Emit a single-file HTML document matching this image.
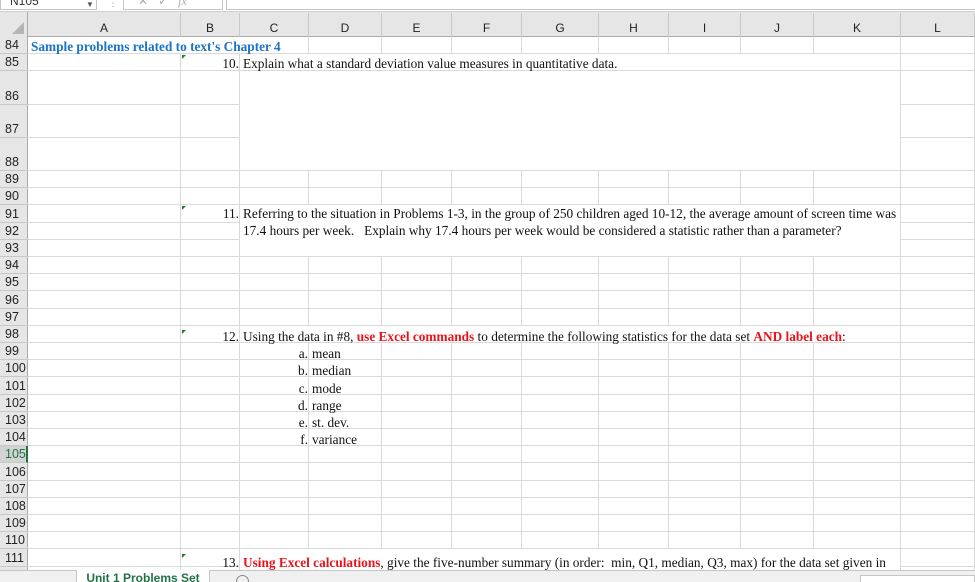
<!DOCTYPE html>
<html><head><meta charset="utf-8"><style>
*{margin:0;padding:0;box-sizing:border-box}
html,body{width:975px;height:582px;overflow:hidden}
body{background:#fff;position:relative;font-family:"Liberation Serif",serif}
.a{position:absolute}
.hdr{font-family:"Liberation Sans",sans-serif;font-size:12px;color:#222}
.t{position:absolute;font-size:13.3px;color:#111;white-space:nowrap;line-height:17px}
.r{color:#e8141b;font-weight:bold}
</style></head><body>
<div class="a" style="left:0;top:0;width:975px;height:12px;background:#fff;border-bottom:1px solid #d0d0d0"></div>
<div class="a" style="left:0;top:-6px;width:97px;height:16px;border:1px solid #c6c6c6;background:#fff;font-family:'Liberation Sans';font-size:12px;padding-left:9px;line-height:12px;color:#333">N105</div>
<div class="a" style="left:86px;top:0;font-size:8px;color:#555">&#9660;</div>
<div class="a" style="left:108px;top:-2px;font-size:10px;color:#999">⋮</div>
<div class="a" style="left:123px;top:-6px;width:100px;height:16px;border:1px solid #c6c6c6;background:#fff"></div>
<div class="a" style="left:138px;top:-6px;font-size:12px;color:#aaa;font-family:'Liberation Sans'">✕ &nbsp; ✓ &nbsp; <i style="font-family:'Liberation Serif'">fx</i></div>
<div class="a" style="left:226px;top:-6px;width:760px;height:16px;border:1px solid #c6c6c6;background:#fff"></div>
<div id="g"></div>
<script>
var cols=[28,181,240,309,382,452,522,599,669,741,814,901,975];
var L="ABCDEFGHIJKL";
var rows=[[84,37,54],[85,54,71],[86,71,105],[87,105,138],[88,138,171]];
var y=171;for(var n=89;n<=111;n++){rows.push([n,y,y+17.2]);y+=17.2;}
var h="";
h+='<div class="a" style="left:0;top:12px;width:975px;height:25px;background:#e6e6e6;border-bottom:1px solid #ababab"></div>';
h+='<div class="a" style="left:0;top:12px;width:28px;height:570px;background:#e6e6e6;border-right:1px solid #ababab"></div>';
h+='<div class="a" style="left:12px;top:22px;width:0;height:0;border-left:12px solid transparent;border-bottom:12px solid #b4b4b4"></div>';
for(var i=0;i<12;i++){var x=cols[i],w=cols[i+1]-x;
h+='<div class="a hdr" style="left:'+x+'px;top:13px;width:'+w+'px;height:24px;line-height:30px;text-align:center;border-right:1px solid #c8c8c8">'+L[i]+'</div>';
h+='<div class="a" style="left:'+(cols[i+1]-1)+'px;top:37px;width:1px;height:533px;background:#d9d9d9"></div>';}
rows.forEach(function(r){var sel=r[0]==105;
h+='<div class="a" style="left:28px;top:'+(r[2]-1)+'px;width:947px;height:1px;background:#d9d9d9"></div>';
h+='<div class="a hdr" style="left:0;top:'+r[1]+'px;width:28px;height:'+(r[2]-r[1])+'px;border-bottom:1px solid #c8c8c8;'+(sel?'background:#d2d2d2;color:#217346;border-right:2px solid #217346;':'')+'"><span style="position:absolute;left:5px;bottom:0;line-height:16px;font-size:12.5px">'+r[0]+'</span></div>';});
function wb(x1,y1,x2,y2){h+='<div class="a" style="background:#fff;left:'+x1+'px;top:'+y1+'px;width:'+(x2-x1)+'px;height:'+(y2-y1)+'px"></div>';}
function Y(n){for(var k=0;k<rows.length;k++)if(rows[k][0]==n)return rows[k];}
wb(28,Y(84)[1],240,Y(84)[2]-1);
wb(240,Y(85)[1],900,Y(85)[2]-1);
wb(240,Y(86)[1],900,Y(88)[2]-1);
wb(240,Y(91)[1],900,Y(93)[2]-1);
wb(240,Y(98)[1],900,Y(98)[2]-1);
wb(240,Y(111)[1],900,570);
document.getElementById('g').innerHTML=h;
</script>
<div class="t" style="left:31px;top:38px;color:#1a73c8;font-weight:bold">Sample problems related to text's Chapter 4</div>
<div class="a" style="left:182px;top:55px;border-top:4px solid #1e7b34;border-right:4px solid transparent"></div>
<div class="t" style="left:181px;top:55px;width:58px;text-align:right">10.</div>
<div class="t" style="left:243px;top:55px">Explain what a standard deviation value measures in quantitative data.</div>
<div class="a" style="left:182px;top:206px;border-top:4px solid #1e7b34;border-right:4px solid transparent"></div>
<div class="t" style="left:181px;top:205px;width:58px;text-align:right">11.</div>
<div class="t" style="left:243px;top:205px">Referring to the situation in Problems 1-3, in the group of 250 children aged 10-12, the average amount of screen time was</div>
<div class="t" style="left:243px;top:222px">17.4 hours per week.&nbsp;&nbsp; Explain why 17.4 hours per week would be considered a statistic rather than a parameter?</div>
<div class="a" style="left:182px;top:330px;border-top:4px solid #1e7b34;border-right:4px solid transparent"></div>
<div class="t" style="left:181px;top:328px;width:58px;text-align:right">12.</div>
<div class="t" style="left:243px;top:328px">Using the data in #8, <span class="r">use Excel commands</span> to determine the following statistics for the data set <span class="r">AND label each</span>:</div>
<div class="t" style="left:240px;top:345px;width:68px;text-align:right">a.</div><div class="t" style="left:312px;top:345px">mean</div>
<div class="t" style="left:240px;top:362px;width:68px;text-align:right">b.</div><div class="t" style="left:312px;top:362px">median</div>
<div class="t" style="left:240px;top:380px;width:68px;text-align:right">c.</div><div class="t" style="left:312px;top:380px">mode</div>
<div class="t" style="left:240px;top:397px;width:68px;text-align:right">d.</div><div class="t" style="left:312px;top:397px">range</div>
<div class="t" style="left:240px;top:414px;width:68px;text-align:right">e.</div><div class="t" style="left:312px;top:414px">st. dev.</div>
<div class="t" style="left:240px;top:431px;width:68px;text-align:right">f.</div><div class="t" style="left:312px;top:431px">variance</div>
<div class="a" style="left:182px;top:554px;border-top:4px solid #1e7b34;border-right:4px solid transparent"></div>
<div class="t" style="left:181px;top:554px;width:58px;text-align:right">13.</div>
<div class="t" style="left:243px;top:554px"><span class="r">Using Excel calculations</span>, give the five-number summary (in order:&nbsp; min, Q1, median, Q3, max) for the data set given in</div>
<div class="a" style="left:0;top:570px;width:975px;height:12px;background:#f0f0f0;border-top:1px solid #c6c6c6"></div>
<div class="a" style="left:76px;top:570px;width:134px;height:12px;background:#fff;border-left:1px solid #c6c6c6;border-right:1px solid #c6c6c6;font-family:'Liberation Sans';font-size:12px;font-weight:bold;color:#217346;text-align:center;line-height:17px;overflow:hidden">Unit 1 Problems Set</div>
<div class="a" style="left:236px;top:575px;width:13px;height:13px;border:1px solid #888;border-radius:50%"></div>
<div class="a" style="left:860px;top:575px;width:115px;height:10px;border:1px solid #c6c6c6;background:#fff"></div>
</body></html>
